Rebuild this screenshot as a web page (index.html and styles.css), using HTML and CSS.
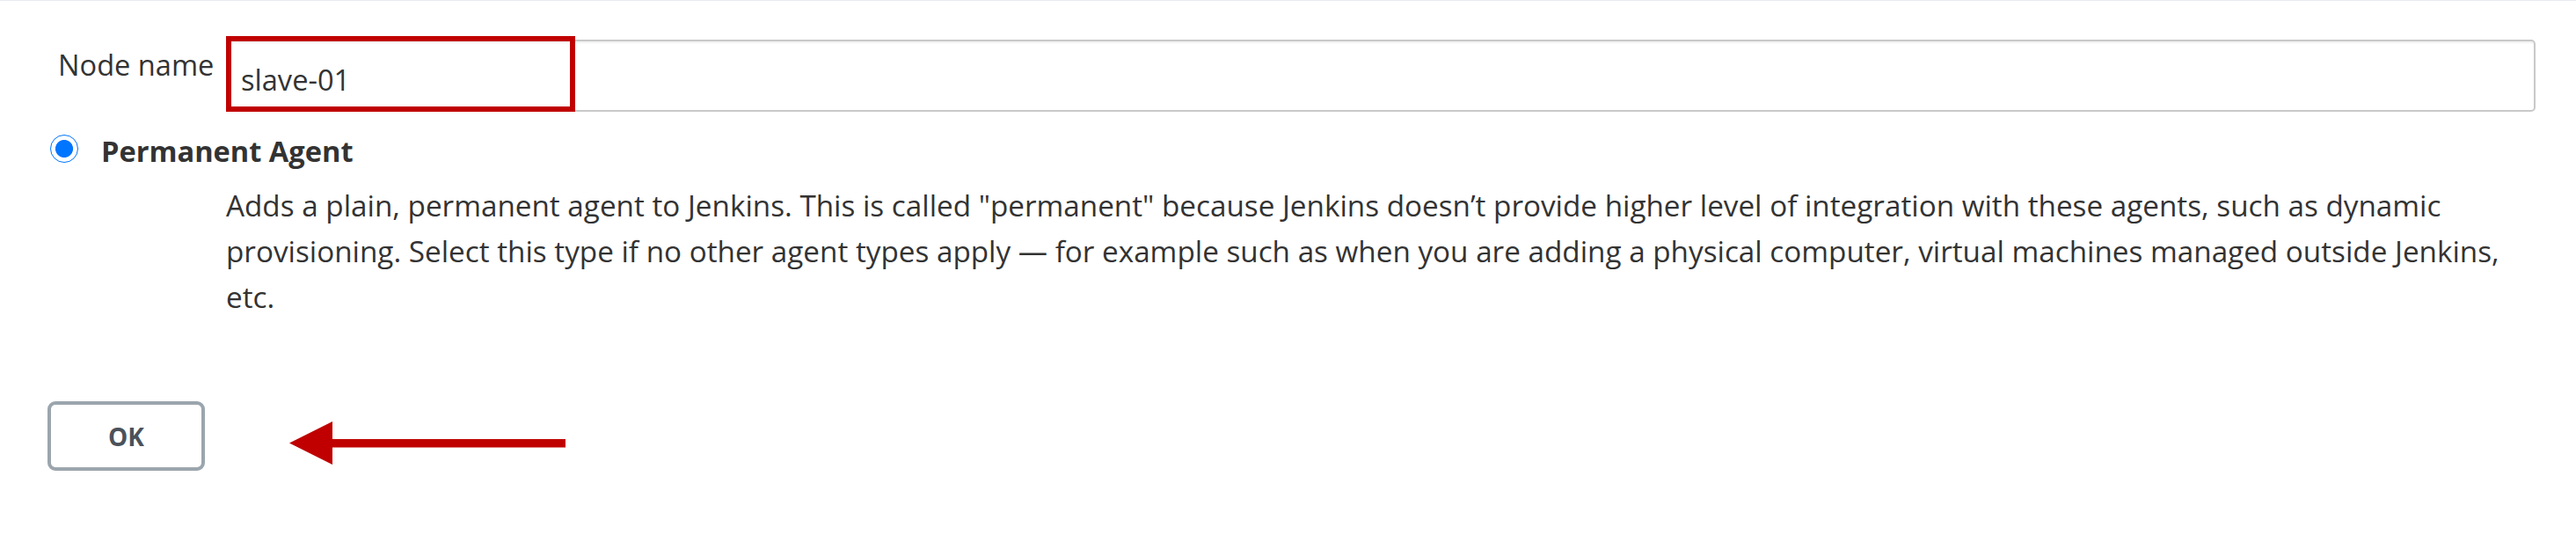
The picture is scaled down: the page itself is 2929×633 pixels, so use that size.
FILE: index.html
```html
<!DOCTYPE html>
<html lang="en">
<head>
<meta charset="utf-8">
<title>New node</title>
<link rel="stylesheet" href="styles.css">
</head>
<body>
<div class="topline"></div>
<form class="form">
  <div class="field">
    <label class="field-label" for="name">Node name</label>
    <div class="input-wrap">
      <input id="name" class="text-input" type="text" value="slave-01">
      <span class="highlight"></span>
    </div>
  </div>

  <div class="option">
    <div class="option-head">
      <input class="radio" type="radio" name="mode" checked>
      <span class="option-title">Permanent Agent</span>
    </div>
    <p class="option-desc">Adds a plain, permanent agent to Jenkins. This is called "permanent" because Jenkins doesn’t provide higher level of integration with these agents, such as dynamic provisioning. Select this type if no other agent types apply — for example such as when you are adding a physical computer, virtual machines managed outside Jenkins, etc.</p>
  </div>

  <div class="actions">
    <button type="button" class="btn">OK</button>
    <svg class="arrow" width="314" height="49" viewBox="0 0 314 49" aria-hidden="true">
      <polygon points="0,24.5 49,0 49,49" fill="#c00000"/>
      <rect x="48" y="20" width="266" height="9.5" fill="#c00000"/>
    </svg>
  </div>
</form>
</body>
</html>
```
FILE: styles.css
```css
html, body {
  margin: 0;
  padding: 0;
  background: #ffffff;
}

body {
  font-family: "Open Sans", "Noto Sans", sans-serif;
  font-size: 32.6px;
  line-height: 52px;
  color: #333333;
}

.topline {
  height: 1px;
  background: #e6ebef;
}

.form {
  padding: 44px 46px 0 54px;
  display: flex;
  flex-direction: column;
}

.field {
  display: flex;
  align-items: flex-start;
}

.field-label {
  flex: none;
  width: 203px;
  box-sizing: border-box;
  padding-left: 12px;
  padding-top: 3px;
  white-space: nowrap;
}

.input-wrap {
  position: relative;
  flex: 1;
  display: flex;
}

.text-input {
  flex: 1;
  box-sizing: border-box;
  height: 82px;
  margin: 0;
  padding: 8px 15px 0;
  font-family: inherit;
  font-size: 32.6px;
  color: #333333;
  border: 2px solid #c9c9c9;
  border-radius: 5px;
  box-shadow: inset 0 2px 2px rgba(0, 0, 0, 0.06);
  background: #ffffff;
  outline: none;
}

.highlight {
  position: absolute;
  left: 0;
  top: -4px;
  width: 397px;
  height: 86px;
  box-sizing: border-box;
  border: 6px solid #c00000;
  pointer-events: none;
}

.option {
  margin-top: 19px;
}

.option-head {
  display: flex;
  align-items: flex-start;
}

.radio {
  appearance: none;
  -webkit-appearance: none;
  flex: none;
  width: 32px;
  height: 32px;
  margin: 7px 0 0 3px;
  box-sizing: border-box;
  border: 1.5px solid #0075ff;
  border-radius: 50%;
  background: radial-gradient(circle, #0075ff 0, #0075ff 9.6px, #ffffff 10.4px);
}

.option-title {
  margin-left: 26px;
  font-weight: 700;
}

.option-desc {
  margin: 9px 0 0 203px;
  max-width: 2610px;
  font-size: 33.25px;
}

.actions {
  margin-top: 93px;
  display: flex;
  align-items: flex-start;
}

.btn {
  flex: none;
  width: 179px;
  height: 79px;
  box-sizing: border-box;
  margin: 0;
  padding: 0;
  border: 4px solid #9ba5ad;
  border-radius: 9px;
  background: #ffffff;
  font-family: "Open Sans", "Noto Sans", sans-serif;
  font-size: 28px;
  font-weight: 700;
  color: #4b525a;
  line-height: 1;
}

.arrow {
  flex: none;
  margin-left: 96px;
  margin-top: 23px;
}
```
